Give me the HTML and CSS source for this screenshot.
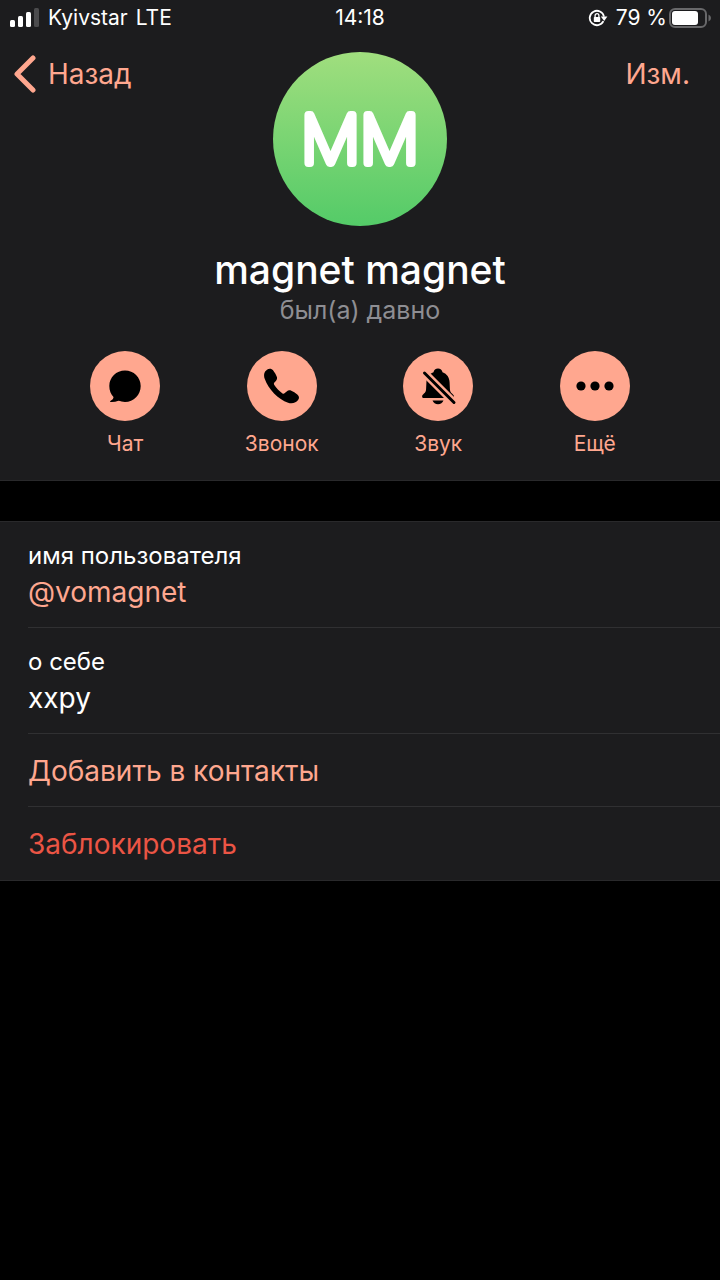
FILE: index.html
```html
<!DOCTYPE html>
<html lang="ru">
<head>
<meta charset="utf-8">
<meta name="viewport" content="width=device-width, initial-scale=1">
<title>magnet magnet</title>
<link rel="stylesheet" href="styles.css">
</head>
<body>
<header class="profile">
  <div class="status">
    <div class="status-left">
      <svg class="signal" width="30" height="19" viewBox="0 0 30 19" aria-hidden="true">
        <rect x="0" y="12" width="5" height="7" rx="1.500" fill="#fff"/>
        <rect x="8" y="8" width="5" height="11" rx="1.500" fill="#fff"/>
        <rect x="16" y="4" width="5" height="15" rx="1.500" fill="#fff"/>
        <rect x="24" y="0" width="5" height="19" rx="1.500" fill="#4b4b4d"/>
      </svg>
      <span>Kyivstar</span>
      <span>LTE</span>
    </div>
    <time class="clock">14:18</time>
    <div class="status-right">
      <svg class="lock" width="20" height="18" viewBox="0 0 20 18" aria-hidden="true">
        <path d="M15.4 12.2A7.2 7.2 0 1 1 16 7.6" fill="none" stroke="#fff" stroke-width="1.800"/>
        <path d="M12.8 7.4h6.6L16.2 12z" fill="#fff"/>
        <rect x="5.8" y="8" width="6.4" height="5" rx="0.8" fill="#fff"/>
        <path d="M7.1 8.4V6.6a1.9 1.9 0 0 1 3.8 0v1.8" fill="none" stroke="#fff" stroke-width="1.3"/>
      </svg>
      <span>79 %</span>
      <svg class="battery" width="43" height="20" viewBox="0 0 43 20" aria-hidden="true">
        <rect x="1" y="1" width="36" height="18" rx="5" fill="none" stroke="#68686a" stroke-width="2"/>
        <rect x="3" y="3" width="26" height="14" rx="3" fill="#fff"/>
        <path d="M39.500 6.500q2.500 1 2.500 3.500t-2.500 3.500z" fill="#68686a"/>
      </svg>
    </div>
  </div>
  <div class="top">
    <button class="nav back" type="button">
      <svg width="22" height="38" viewBox="0 0 22 38" aria-hidden="true"><path d="M19 3L3 19l16 16" fill="none" stroke="currentColor" stroke-width="5" stroke-linecap="round" stroke-linejoin="round"/></svg>
      <span>Назад</span>
    </button>
    <div class="avatar">
      <svg width="174" height="174" viewBox="0 0 174 174" role="img" aria-label="MM"><text class="initials" x="87" y="111">MM</text></svg>
    </div>
    <button class="nav edit" type="button">Изм.</button>
  </div>
  <h1 class="name">magnet magnet</h1>
  <p class="seen">был(а) давно</p>
  <div class="actions">
    <button class="action" type="button">
      <svg class="disc" viewBox="0 0 70 70" aria-hidden="true"><path d="M35 19.500c8.700 0 15.700 6.800 15.700 15.500S43.700 51 35 51c-2.400 0-4.600-.8-6.500-1.200-2.500.9-5.200 1.400-8 1.200-.6-.1-.6-.6-.1-.9 2-1.100 3.200-2.500 3.100-4-2.600-2.700-4.200-6.800-4.200-11.100 0-8.700 7-15.500 15.700-15.500z"/></svg>
      <span>Чат</span>
    </button>
    <button class="action" type="button">
      <svg class="disc" viewBox="0 0 70 70" aria-hidden="true"><path d="M20 18.700c2-1.500 4.800-1.200 6.200.7 1.700 2.200 3 4.500 3.700 6.600.5 1.600 0 2.700-1 3.900l-1.500 1.700c-.7.800-.6 1.500-.1 2.400 2 3.200 4.900 6.200 8.200 8.400.9.600 1.600.4 2.300-.3l1.900-1.700c1.400-1.200 3-1.400 4.600-.6 2 .9 4 2.100 6 3.700 1.800 1.500 2.200 3.200 1.100 5-2.200 3.500-6.300 4.600-10.300 3.300C31.300 48.200 21.300 38.300 17.800 28c-1.200-3.800-1-7.100 2.200-9.300z"/></svg>
      <span>Звонок</span>
    </button>
    <button class="action" type="button">
      <svg class="disc" viewBox="0 0 70 70" aria-hidden="true">
        <path d="M35 17.500c2.300 0 4.200 1.500 4.500 3.800 4.500 1.700 6.900 5.300 7.100 9.900l.3 6.700c.1 2 .8 3.500 2.100 4.700l1.400 1.300c.9.900.6 3.100-.9 3.100h-29c-1.500 0-1.800-2.200-.9-3.100l1.400-1.300c1.300-1.200 2-2.700 2.100-4.700l.3-6.700c.2-4.600 2.600-8.200 7.100-9.900.3-2.300 2.200-3.800 4.500-3.800z"/>
        <path d="M29.500 49.500h11c-.9 2.400-3 3.700-5.500 3.700s-4.600-1.300-5.500-3.700z"/>
        <path class="slash-gap" d="M20 20.500l32 32"/>
        <path class="slash" d="M21.500 22l29.500 29.500"/>
      </svg>
      <span>Звук</span>
    </button>
    <button class="action" type="button">
      <svg class="disc" viewBox="0 0 70 70" aria-hidden="true"><circle cx="21" cy="35" r="4.600"/><circle cx="35" cy="35" r="4.600"/><circle cx="49" cy="35" r="4.600"/></svg>
      <span>Ещё</span>
    </button>
  </div>
</header>
<main class="details">
  <div class="row field">
    <span class="label">имя пользователя</span>
    <a class="value accent" href="#">@vomagnet</a>
  </div>
  <div class="row field">
    <span class="label">о себе</span>
    <span class="value">ххру</span>
  </div>
  <button class="row command accent" type="button">Добавить в контакты</button>
  <button class="row command danger" type="button">Заблокировать</button>
</main>
</body>
</html>
```
FILE: styles.css
```css
* { box-sizing: border-box; }

body {
  margin: 0;
  min-height: 100vh;
  background: #000;
  color: #fff;
  font-family: Inter, "Liberation Sans", sans-serif;
}

button {
  margin: 0;
  padding: 0;
  border: 0;
  background: none;
  font: inherit;
  color: inherit;
  text-align: left;
  cursor: pointer;
}

svg { display: block; flex: none; }

.profile {
  background: #1c1c1e;
  border-bottom: 1px solid #29292b;
  padding-bottom: 22px;
}

.status {
  display: grid;
  grid-template-columns: 1fr auto 1fr;
  align-items: center;
  height: 35px;
  padding: 0 10px;
  font-size: 21px;
  line-height: 35px;
}

.status-left,
.status-right {
  display: flex;
  align-items: center;
  gap: 8px;
}

.status-right { justify-content: flex-end; }
.battery { margin: 0 -2px 0 -6px; }

.top {
  display: grid;
  grid-template-columns: 1fr auto 1fr;
  align-items: start;
  padding: 17px 14px 0;
}

.nav {
  display: flex;
  align-items: center;
  gap: 12px;
  height: 44px;
  font-size: 28px;
  line-height: 44px;
  color: #ffa78f;
}

.edit {
  justify-self: end;
  margin-right: 16px;
}

.avatar {
  width: 174px;
  height: 174px;
  border-radius: 50%;
  background: linear-gradient(#a0de7e, #54cb68);
}

.initials {
  font-size: 66px;
  font-weight: 100;
  text-anchor: middle;
  fill: #fff;
  stroke: #fff;
  stroke-width: 8px;
  stroke-linejoin: round;
}

.name {
  margin: 20px 0 0;
  font-size: 39px;
  font-weight: 500;
  line-height: 48px;
  text-align: center;
}

.seen {
  margin: 0;
  font-size: 25px;
  line-height: 32px;
  text-align: center;
  color: #8e8e93;
}

.actions {
  display: grid;
  grid-template-columns: repeat(4, 1fr);
  padding: 25px 47px 0;
}

.action {
  display: flex;
  flex-direction: column;
  align-items: center;
  gap: 8px;
  font-size: 21px;
  line-height: 29px;
  color: #ffa78f;
}

.disc {
  width: 70px;
  height: 70px;
  border-radius: 50%;
  background: #ffa78f;
}

.slash-gap { fill: none; stroke: #ffa78f; stroke-width: 8px; }
.slash { fill: none; stroke: #000; stroke-width: 3px; stroke-linecap: round; }

.details {
  margin-top: 40px;
  background: #1c1c1e;
  border-top: 1px solid #29292b;
  border-bottom: 1px solid #29292b;
}

.row {
  display: block;
  position: relative;
  width: 100%;
  padding-left: 28px;
}

.row + .row::before {
  content: "";
  position: absolute;
  top: -1px;
  left: 28px;
  right: 0;
  height: 1px;
  background: #303032;
}

.field {
  display: flex;
  flex-direction: column;
  align-items: flex-start;
  padding-top: 18px;
  padding-bottom: 16px;
}

.label { font-size: 24px; line-height: 32px; }

.value,
.command {
  font-size: 28px;
  line-height: 40px;
  text-decoration: none;
}

.value { color: #fff; }
.command { height: 73px; }
.accent { color: #ffa78f; }
.danger { color: #eb5545; }
```
